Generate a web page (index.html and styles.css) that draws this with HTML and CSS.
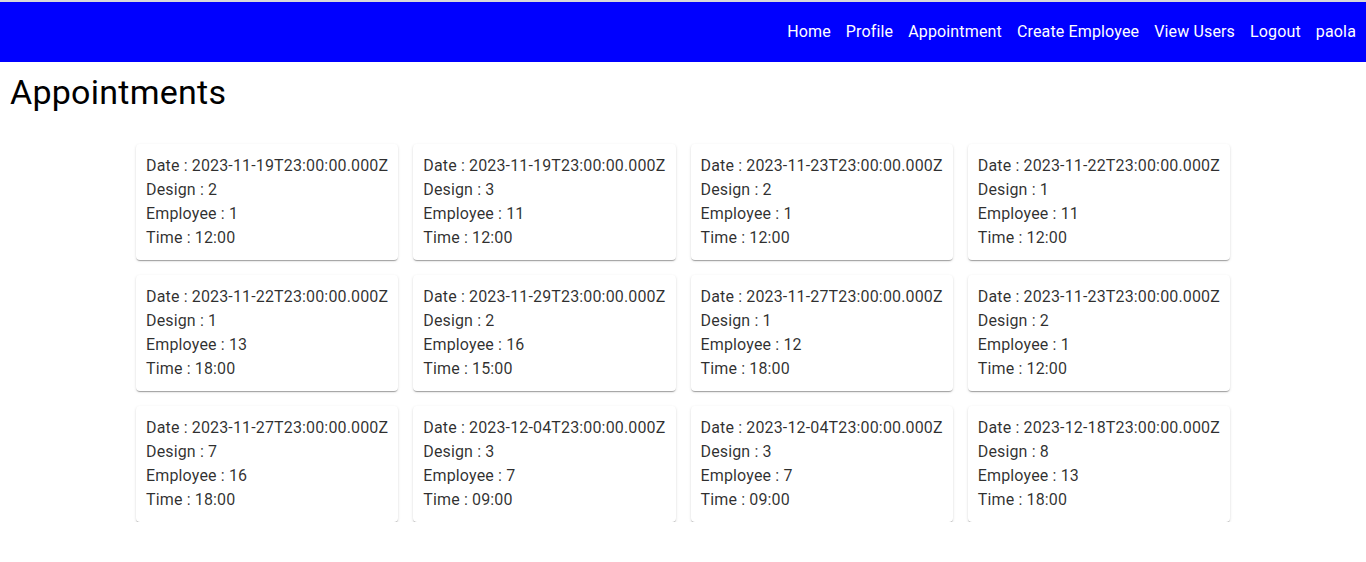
FILE: index.html
```html
<!DOCTYPE html>
<html lang="en">
<head>
<meta charset="utf-8">
<title>Appointments</title>
<link rel="stylesheet" href="styles.css">
</head>
<body>
<div class="topline"></div>
<nav class="navbar">
  <a class="nav-link" href="#">Home</a>
  <a class="nav-link" href="#">Profile</a>
  <a class="nav-link" href="#">Appointment</a>
  <a class="nav-link" href="#">Create Employee</a>
  <a class="nav-link" href="#">View Users</a>
  <a class="nav-link" href="#">Logout</a>
  <span class="nav-link">paola</span>
</nav>
<h1 class="page-title">Appointments</h1>
<main class="grid">
  <div class="card"><p>Date : 2023-11-19T23:00:00.000Z</p><p>Design : 2</p><p>Employee : 1</p><p>Time : 12:00</p></div>
  <div class="card"><p>Date : 2023-11-19T23:00:00.000Z</p><p>Design : 3</p><p>Employee : 11</p><p>Time : 12:00</p></div>
  <div class="card"><p>Date : 2023-11-23T23:00:00.000Z</p><p>Design : 2</p><p>Employee : 1</p><p>Time : 12:00</p></div>
  <div class="card"><p>Date : 2023-11-22T23:00:00.000Z</p><p>Design : 1</p><p>Employee : 11</p><p>Time : 12:00</p></div>
  <div class="card"><p>Date : 2023-11-22T23:00:00.000Z</p><p>Design : 1</p><p>Employee : 13</p><p>Time : 18:00</p></div>
  <div class="card"><p>Date : 2023-11-29T23:00:00.000Z</p><p>Design : 2</p><p>Employee : 16</p><p>Time : 15:00</p></div>
  <div class="card"><p>Date : 2023-11-27T23:00:00.000Z</p><p>Design : 1</p><p>Employee : 12</p><p>Time : 18:00</p></div>
  <div class="card"><p>Date : 2023-11-23T23:00:00.000Z</p><p>Design : 2</p><p>Employee : 1</p><p>Time : 12:00</p></div>
  <div class="card"><p>Date : 2023-11-27T23:00:00.000Z</p><p>Design : 7</p><p>Employee : 16</p><p>Time : 18:00</p></div>
  <div class="card"><p>Date : 2023-12-04T23:00:00.000Z</p><p>Design : 3</p><p>Employee : 7</p><p>Time : 09:00</p></div>
  <div class="card"><p>Date : 2023-12-04T23:00:00.000Z</p><p>Design : 3</p><p>Employee : 7</p><p>Time : 09:00</p></div>
  <div class="card"><p>Date : 2023-12-18T23:00:00.000Z</p><p>Design : 8</p><p>Employee : 13</p><p>Time : 18:00</p></div>
</main>
</body>
</html>
```
FILE: styles.css
```css
html, body {
  margin: 0;
  padding: 0;
  background: #ffffff;
  font-family: Roboto, "Liberation Sans", Arial, sans-serif;
}

.topline {
  height: 2px;
  background: #d9d9d9;
}

.navbar {
  height: 60px;
  background: #0000ff;
  display: flex;
  align-items: center;
  justify-content: flex-end;
  gap: 15px;
  padding: 0 10px;
}

.nav-link {
  color: #ffffff;
  text-decoration: none;
  font-size: 16px;
  line-height: 24px;
  letter-spacing: 0.15px;
}

.page-title {
  margin: 9px 0 0 10px;
  font-size: 34px;
  font-weight: 400;
  line-height: 42px;
  letter-spacing: 0.25px;
  color: #000000;
}

.grid {
  width: 1094px;
  margin: 31px auto 0;
  display: grid;
  grid-template-columns: repeat(4, 1fr);
  column-gap: 15px;
  row-gap: 15px;
}

.card {
  background: #ffffff;
  border-radius: 4px;
  padding: 10px;
  box-shadow: 0 2px 1px -1px rgba(0,0,0,0.2), 0 1px 1px 0 rgba(0,0,0,0.14), 0 1px 3px 0 rgba(0,0,0,0.12);
  color: rgba(0,0,0,0.82);
}

.card p {
  margin: 0;
  font-size: 16px;
  line-height: 24px;
  letter-spacing: 0.15px;
}
```
